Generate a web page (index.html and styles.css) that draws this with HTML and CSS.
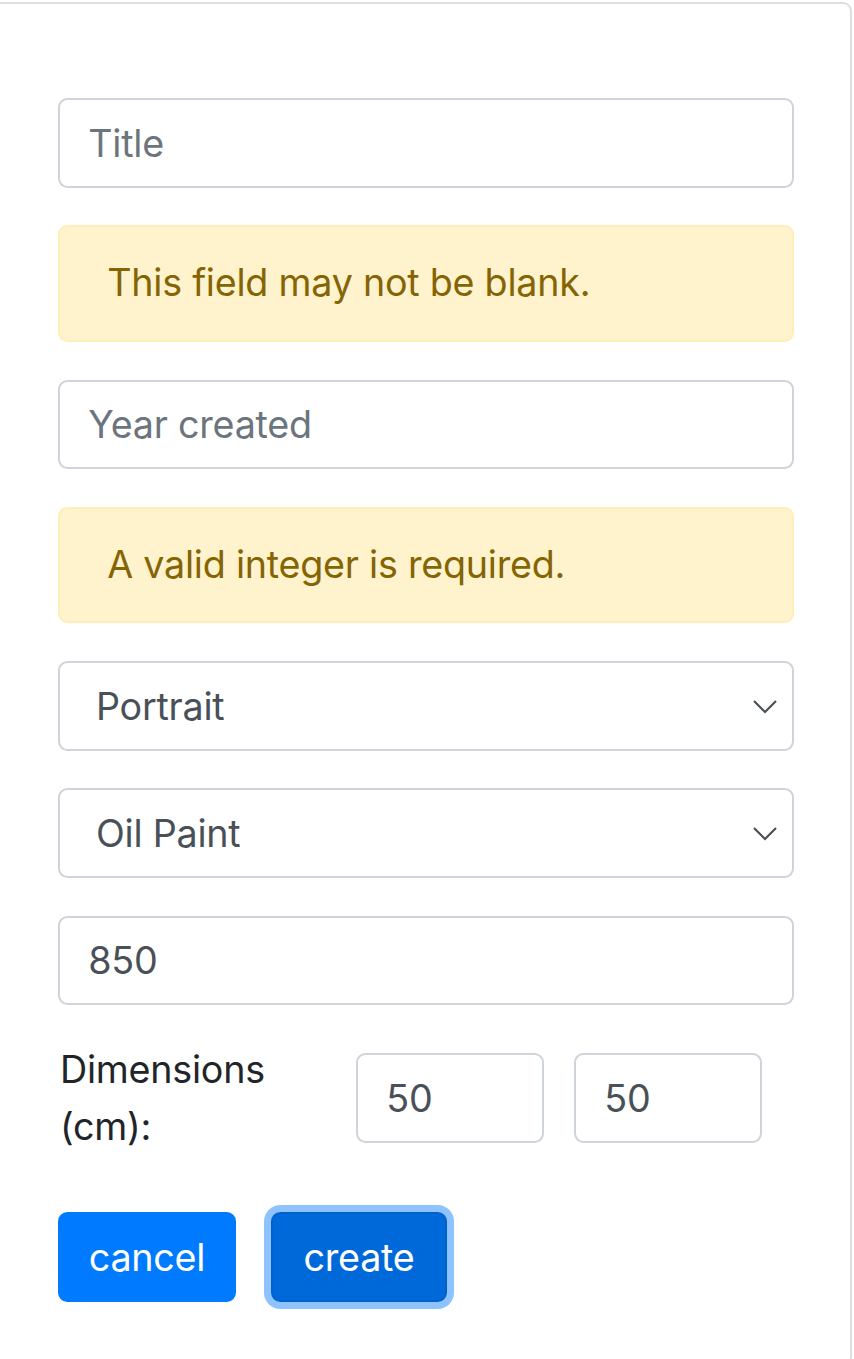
FILE: index.html
```html
<!DOCTYPE html>
<html lang="en">
<head>
<meta charset="utf-8">
<title>New painting</title>
<link rel="stylesheet" href="styles.css">
</head>
<body>
<div class="card">
  <form class="form">
    <input class="field" type="text" placeholder="Title">
    <div class="alert">This field may not be blank.</div>
    <input class="field" type="text" placeholder="Year created">
    <div class="alert">A valid integer is required.</div>
    <div class="select-wrap">
      <select class="field select"><option>Portrait</option></select>
      <svg class="chev" width="26" height="16" viewBox="0 0 26 16"><polyline points="2,2 13,13 24,2" fill="none" stroke="#495057" stroke-width="2.2"/></svg>
    </div>
    <div class="select-wrap">
      <select class="field select"><option>Oil Paint</option></select>
      <svg class="chev" width="26" height="16" viewBox="0 0 26 16"><polyline points="2,2 13,13 24,2" fill="none" stroke="#495057" stroke-width="2.2"/></svg>
    </div>
    <input class="field" type="text" value="850">
    <div class="dims">
      <label class="dims-label">Dimensions (cm):</label>
      <input class="field small" type="text" value="50">
      <input class="field small" type="text" value="50">
    </div>
    <div class="actions">
      <button type="button" class="btn btn-cancel">cancel</button>
      <button type="button" class="btn btn-create">create</button>
    </div>
  </form>
</div>
</body>
</html>
```
FILE: styles.css
```css
html, body {
  margin: 0;
  padding: 0;
  background: #ffffff;
}
body {
  font-family: "Inter", "Roboto", sans-serif;
  font-size: 37.7px;
  line-height: 1.5;
  letter-spacing: -0.25px;
  color: #212529;
  overflow: hidden;
}
.card {
  margin: 2px 2px 0 -12px;
  border: 2px solid #dddee0;
  border-radius: 9px;
  height: 1364px;
  box-sizing: border-box;
  padding: 94px 56px 0 68px;
}
.form {
  display: flex;
  flex-direction: column;
}
.field {
  box-sizing: border-box;
  height: 89.6px;
  width: 100%;
  margin: 0 0 37.7px 0;
  padding: 0 28.3px;
  border: 2px solid #ced4da;
  border-radius: 9.4px;
  background: #fff;
  font-family: inherit;
  font-size: 37.7px;
  letter-spacing: inherit;
  color: #495057;
  outline: none;
}
.field::placeholder {
  color: #6c757d;
  opacity: 1;
}
.alert {
  box-sizing: border-box;
  height: 116.6px;
  margin: 0 0 37.7px 0;
  padding: 27px 47.2px 0;
  border: 2px solid #ffeeba;
  border-radius: 9.4px;
  background: #fff3cd;
  color: #856404;
}
.select-wrap {
  position: relative;
}
.select {
  appearance: none;
  -webkit-appearance: none;
  padding-left: 36px;
}
.chev {
  position: absolute;
  right: 16px;
  top: 38px;
  pointer-events: none;
}
.dims {
  display: grid;
  grid-template-columns: 268px 188px 188px;
  column-gap: 30px;
  align-items: start;
  margin-bottom: 58px;
}
.dims-label {
  display: block;
  margin-top: -2px;
  padding-left: 2px;
  color: #212529;
}
.field.small {
  margin: 10.5px 0 0 0;
  width: 188px;
}
.actions {
  display: flex;
  gap: 35px;
}
.btn {
  box-sizing: border-box;
  height: 89.6px;
  border: 2px solid #007bff;
  border-radius: 9.4px;
  background: #007bff;
  color: #ffffff;
  font-family: inherit;
  font-size: 37.7px;
  letter-spacing: inherit;
  padding: 0;
  text-align: center;
  cursor: pointer;
}
.btn-cancel {
  width: 178px;
}
.btn-create {
  width: 176px;
  background: #0069d9;
  border-color: #0062cc;
  box-shadow: 0 0 0 7px #8fc3ff;
}
```
